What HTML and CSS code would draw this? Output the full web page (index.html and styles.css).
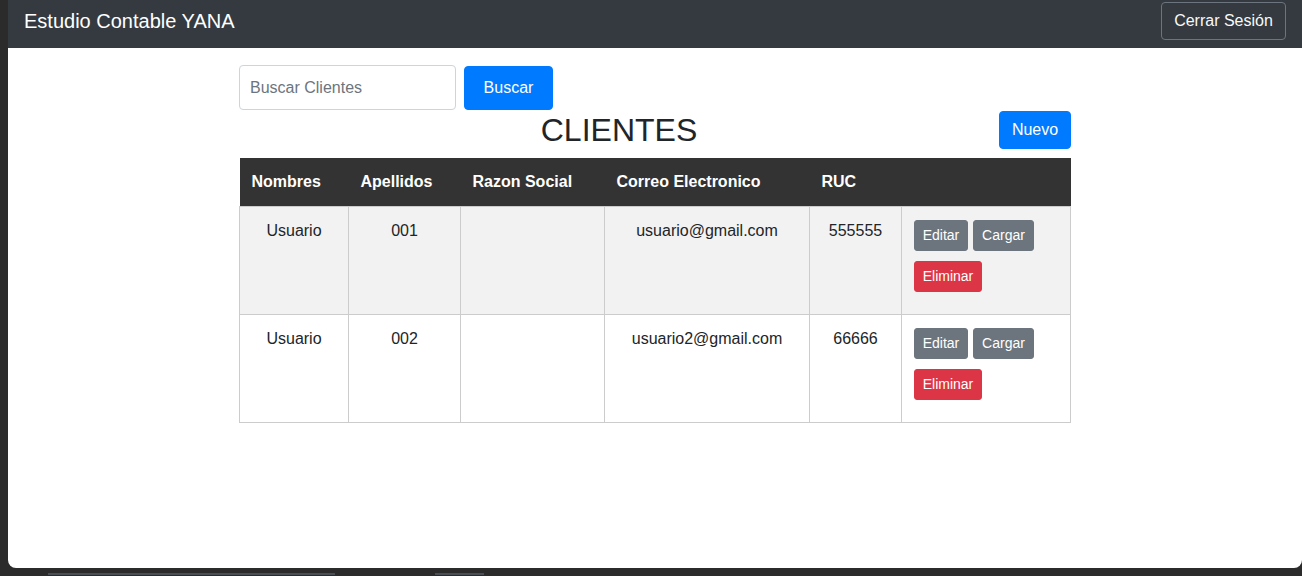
FILE: index.html
```html
<!DOCTYPE html>
<html lang="es">
<head>
<meta charset="utf-8">
<title>Estudio Contable YANA</title>
<link rel="stylesheet" href="styles.css">
</head>
<body>
<div class="desktop">
  <div class="window">
    <nav class="navbar">
      <span class="brand">Estudio Contable YANA</span>
      <button class="btn-logout">Cerrar Sesión</button>
    </nav>
    <main class="content">
      <div class="container">
        <form class="search">
          <input class="search-input" type="text" placeholder="Buscar Clientes">
          <button class="btn btn-primary btn-search" type="button">Buscar</button>
        </form>
        <div class="title-row">
          <h2 class="title">CLIENTES</h2>
          <button class="btn btn-primary btn-new" type="button">Nuevo</button>
        </div>
        <table class="clients">
          <colgroup>
            <col class="c1"><col class="c2"><col class="c3"><col class="c4"><col class="c5"><col class="c6">
          </colgroup>
          <thead>
            <tr>
              <th>Nombres</th>
              <th>Apellidos</th>
              <th>Razon Social</th>
              <th>Correo Electronico</th>
              <th>RUC</th>
              <th></th>
            </tr>
          </thead>
          <tbody>
            <tr class="striped">
              <td>Usuario</td>
              <td>001</td>
              <td></td>
              <td>usuario@gmail.com</td>
              <td>555555</td>
              <td class="actions">
                <div class="action-wrap">
                  <button class="btn-sm btn-secondary btn-edit">Editar</button>
                  <button class="btn-sm btn-secondary btn-load">Cargar</button>
                  <button class="btn-sm btn-danger btn-delete">Eliminar</button>
                </div>
              </td>
            </tr>
            <tr>
              <td>Usuario</td>
              <td>002</td>
              <td></td>
              <td>usuario2@gmail.com</td>
              <td>66666</td>
              <td class="actions">
                <div class="action-wrap">
                  <button class="btn-sm btn-secondary btn-edit">Editar</button>
                  <button class="btn-sm btn-secondary btn-load">Cargar</button>
                  <button class="btn-sm btn-danger btn-delete">Eliminar</button>
                </div>
              </td>
            </tr>
          </tbody>
        </table>
      </div>
    </main>
  </div>
  <div class="taskbar">
    <span class="task task-a"></span>
    <span class="task task-b"></span>
  </div>
</div>
</body>
</html>
```
FILE: styles.css
```css
* { box-sizing: border-box; }

html, body {
  margin: 0;
  padding: 0;
  height: 100%;
  background: #2b2b2b;
  font-family: "Liberation Sans", Arial, sans-serif;
  color: #212529;
  overflow: hidden;
}

.desktop {
  display: flex;
  flex-direction: column;
  height: 576px;
  padding-left: 8px;
}

.window {
  height: 568px;
  background: #fff;
  border-radius: 0 0 8px 8px;
  overflow: hidden;
  display: flex;
  flex-direction: column;
}

.navbar {
  height: 48px;
  background: #343a40;
  display: flex;
  align-items: flex-start;
  justify-content: space-between;
  padding: 2px 16px 0 16px;
}

.brand {
  height: 38px;
  display: flex;
  align-items: center;
  color: #fff;
  font-size: 20px;
}

.btn-logout {
  height: 38px;
  width: 125px;
  padding: 0;
  background: transparent;
  border: 1px solid #6c757d;
  border-radius: 4px;
  color: #f8f9fa;
  font-family: inherit;
  font-size: 16px;
}

.content {
  flex: 1;
}

.container {
  width: 832px;
  margin: 0 auto;
  padding-top: 17px;
}

.search {
  display: flex;
  gap: 8px;
  margin: 0;
}

.search-input {
  width: 217px;
  height: 45px;
  border: 1px solid #ced4da;
  border-radius: 4px;
  padding: 0 10px;
  font-family: inherit;
  font-size: 16px;
  color: #495057;
}

.search-input::placeholder {
  color: #6c757d;
}

.btn {
  font-family: inherit;
  font-size: 16px;
  border-radius: 4px;
  border: 1px solid transparent;
  color: #fff;
}

.btn-primary {
  background: #007bff;
  border-color: #007bff;
}

.btn-search {
  width: 89px;
  height: 44px;
  margin-top: 1px;
  padding: 0;
}

.title-row {
  display: flex;
  align-items: flex-start;
  margin-top: 1px;
  margin-bottom: 9px;
}

.title {
  flex: 1;
  margin: 0;
  text-align: center;
  font-size: 32px;
  font-weight: 400;
  line-height: 1.2;
}

.btn-new {
  width: 72px;
  height: 38px;
  padding: 0;
}

.clients {
  width: 831px;
  table-layout: fixed;
  border-collapse: collapse;
  font-size: 16px;
}

.c1 { width: 109px; }
.c2 { width: 112px; }
.c3 { width: 144px; }
.c4 { width: 205px; }
.c5 { width: 92px; }
.c6 { width: 169px; }

.clients th {
  background: #333;
  color: #fff;
  font-weight: 700;
  text-align: left;
  padding: 12px;
  line-height: 24px;
  border: none;
}

.clients td {
  border: 1px solid #ccc;
  padding: 12px;
  line-height: 24px;
  text-align: center;
  vertical-align: top;
}

.clients tr.striped td {
  background: #f2f2f2;
}

.clients td.actions {
  text-align: left;
}

.action-wrap {
  display: flex;
  flex-wrap: wrap;
  column-gap: 5px;
  padding-top: 1px;
}

.btn-sm {
  font-family: inherit;
  font-size: 14px;
  line-height: 21px;
  padding: 0;
  height: 31px;
  margin: 0 0 10px 0;
  border: 1px solid transparent;
  border-radius: 3px;
  color: #fff;
  text-align: center;
}

.btn-edit { width: 54px; }
.btn-load { width: 61px; }
.btn-delete { width: 68px; }

.btn-secondary {
  background: #6c757d;
  border-color: #6c757d;
}

.btn-danger {
  background: #dc3545;
  border-color: #dc3545;
}

.taskbar {
  height: 8px;
  display: flex;
  align-items: flex-end;
  padding-bottom: 1px;
  margin-left: -8px;
}

.task {
  height: 2px;
  background: #4a4f55;
}

.task-a {
  width: 287px;
  margin-left: 48px;
}

.task-b {
  width: 49px;
  margin-left: 100px;
}
```
